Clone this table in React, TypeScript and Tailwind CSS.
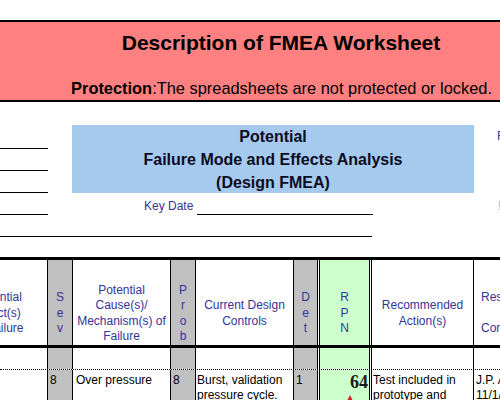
import React from "react";

const SANS = "font-['Liberation_Sans',Arial,sans-serif]";

// column shells, left to right, as the spreadsheet grid draws them
const COLS = [
  "w-[48px] border-r border-black",
  "w-[25px] border-r border-black bg-[#C0C0C0]",
  "w-[98px] border-r border-black",
  "w-[25px] border-r border-black bg-[#C0C0C0]",
  "w-[98px] border-r border-black",
  "w-[24px] border-r border-black bg-[#C0C0C0]",
  "w-[1px]",
  "w-[51px] border-x border-black bg-[#CCFFCC]",
  "w-[1px]",
  "w-[103px] border-x border-black",
  "w-[60px]",
];

const Stack = ({ letters }: { letters: string[] }) => (
  <div className="flex flex-col items-center">
    {letters.map((l, i) => (
      <span key={i}>{l}</span>
    ))}
  </div>
);

const header: React.ReactNode[] = [
  <div className="w-[97px] ml-[-50px] shrink-0 text-center">
    Potential
    <br />
    Effect(s)
    <br />
    of Failure
  </div>,
  <Stack letters={["S", "e", "v"]} />,
  <div className="text-center">
    Potential
    <br />
    Cause(s)/
    <br />
    Mechanism(s) of
    <br />
    Failure
  </div>,
  <Stack letters={["P", "r", "o", "b"]} />,
  <div className="text-center">
    Current Design
    <br />
    Controls
  </div>,
  <Stack letters={["D", "e", "t"]} />,
  null,
  <Stack letters={["R", "P", "N"]} />,
  null,
  <div className="text-center">
    Recommended
    <br />
    Action(s)
  </div>,
  <div className="w-full pl-[7px] whitespace-nowrap">
    Responsibility &amp;
    <br />
    &nbsp;
    <br />
    Completion Date
  </div>,
];

const data: React.ReactNode[] = [
  null,
  <div className="pl-[2px]">8</div>,
  <div className="pl-[3px]">Over pressure</div>,
  <div className="pl-[2px]">8</div>,
  <div className="pl-[1px] whitespace-nowrap">
    Burst, validation
    <br />
    pressure cycle.
  </div>,
  <div className="pl-[2px]">1</div>,
  null,
  <div className="flex flex-col items-end pr-[1px]">
    <span className="font-['Liberation_Serif',serif] font-bold text-[18px] leading-[18px] text-[#1a1a1a]">64</span>
    <svg width="8" height="8" viewBox="0 0 8 8" className="mr-[14px] mt-[4px]">
      <path d="M4 0 L8 8 L0 8 Z" fill="#d42020" />
    </svg>
  </div>,
  null,
  <div className="pl-[1px] whitespace-nowrap">
    Test included in
    <br />
    prototype and
  </div>,
  <div className="pl-[2px] whitespace-nowrap">
    J.P. Aguirre
    <br />
    11/1/01
  </div>,
];

export default function App() {
  return (
    <div className={`w-[500px] h-[400px] overflow-hidden bg-white text-black ${SANS}`}>
      <div className="h-[20px]" />

      {/* title band */}
      <div className="h-[82px] border-y-2 border-black bg-[#FF8080] pt-[9px]">
        <div className="pl-[62px] text-center text-[21px] leading-[24px] font-bold whitespace-nowrap">
          Description of FMEA Worksheet
        </div>
        <div className="mt-[24px] pr-[8px] text-right text-[16.4px] leading-[19px] whitespace-nowrap">
          <span className="font-bold">Protection</span>:The spreadsheets are not protected or locked.
        </div>
      </div>

      {/* form heading area */}
      <div className="flex h-[113px]">
        <div className="w-[48px] shrink-0 flex flex-col">
          <div className="h-[47px] border-b border-black" />
          <div className="h-[22px] border-b border-black" />
          <div className="h-[22px] border-b border-black" />
          <div className="h-[22px] border-b border-black" />
        </div>
        <div className="w-[24px] shrink-0" />
        <div className="w-[402px] shrink-0 flex flex-col">
          <div className="mt-[23px] h-[68px] bg-[#A6C9EE] flex flex-col items-center justify-center text-[16px] leading-[23px] font-bold text-[#0b0b1e]">
            <span>Potential</span>
            <span>Failure Mode and Effects Analysis</span>
            <span>(Design FMEA)</span>
          </div>
          <div className="h-[22px] flex items-end">
            <span className="ml-[72px] pb-[1px] text-[12px] leading-[15px] text-[#333399]">Key Date</span>
            <div className="ml-[4px] w-[176px] h-full border-b border-black" />
          </div>
        </div>
        <div className="flex-1 flex flex-col overflow-hidden">
          <span className="mt-[27px] ml-[23px] text-[12px] leading-[15px] text-[#333399]">F</span>
          <span className="mt-[55px] ml-[24px] text-[12px] leading-[15px] text-[#f0a0a0]">!</span>
        </div>
      </div>
      <div className="h-[22px] w-[372px] border-b border-black" />
      <div className="h-[20px]" />

      {/* worksheet table */}
      <div className="flex h-[91px] border-y-[3px] border-black text-[12px] leading-[15.5px] text-[#333399]">
        {COLS.map((c, i) => (
          <div key={i} className={`${c} shrink-0 flex items-center justify-center pt-[22px] overflow-hidden`}>
            {header[i]}
          </div>
        ))}
      </div>
      <div className="flex h-[21px]">
        {COLS.map((c, i) => (
          <div key={i} className={`${c} shrink-0`} />
        ))}
      </div>
      <div className="flex h-[40px] border-t border-dotted border-black text-[12px] leading-[15px]">
        {COLS.map((c, i) => (
          <div key={i} className={`${c} shrink-0 pt-[3px] overflow-hidden`}>
            {data[i]}
          </div>
        ))}
      </div>
    </div>
  );
}
